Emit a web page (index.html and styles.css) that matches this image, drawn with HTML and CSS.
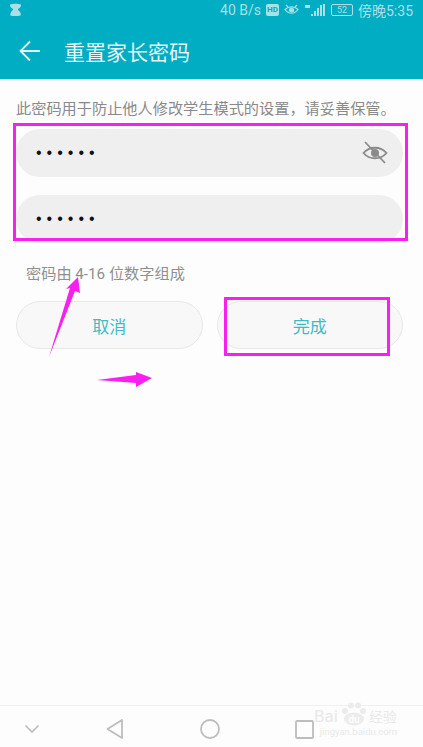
FILE: index.html
```html
<!DOCTYPE html>
<html lang="zh-CN">
<head>
  <meta charset="UTF-8">
  <title>重置家长密码</title>
  <link rel="stylesheet" href="styles.css">
</head>
<body>
  <div class="screen">
    <!-- 顶部栏 -->
    <header class="appbar">
      <div class="status">
        <svg class="status-logo" width="13" height="14" viewBox="0 0 13 14"><path d="M1 1.500C4 .5 9 .5 12 1.500c.5 2-1.500 3.500-3 4.500 0 1 .5 1.500 1.500 2.500 1.500 1.500 1.500 3 1 4-3 .8-8 .8-10 0-.5-1 0-2.500 1-4 1-1 1.500-1.500 1.500-2.500C2.500 5 .5 3.500 1 1.500z" fill="#a8e0e6"/></svg>
        <div class="status-right">
          <span>40 B/s</span>
          <span class="hd">HD</span>
          <svg width="15" height="12" viewBox="0 0 15 12" fill="none" stroke="#a8e0e6" stroke-width="1.200"><path d="M1 5.500c3.500-3.500 9.500-3.500 13 0-3.500 5-9.500 5-13 0z"/><circle cx="7.500" cy="6" r="2" fill="#a8e0e6"/><path d="M2 1l2 2M13 1l-2 2"/></svg>
          <svg width="22" height="14" viewBox="0 0 22 14" fill="#a8e0e6"><rect x="7" y="11" width="2" height="2"/><rect x="10" y="8" width="2" height="5"/><rect x="13" y="5" width="2" height="8"/><rect x="16" y="2" width="2" height="11"/><rect x="19" y="1" width="2" height="12"/><rect x="1" y="2" width="5" height="3"/></svg>
          <span class="battery">52</span>
          <span class="status-time">傍晚5:35</span>
        </div>
      </div>
      <div class="titlebar">
        <svg class="back" width="22" height="22" viewBox="0 0 22 22" fill="none" stroke="#e6f7f9" stroke-width="1.800"><path d="M21 11H1.500M11 1.500 1.500 11l9.500 9.500"/></svg>
        <h1>重置家长密码</h1>
      </div>
    </header>

    <!-- 主内容 -->
    <main class="content">
      <p class="intro">此密码用于防止他人修改学生模式的设置，请妥善保管。</p>
      <div class="field field-first">
        <span class="dots">••••••</span>
        <svg width="26" height="24" viewBox="0 0 26 24" fill="none" stroke="#8a8a8a" stroke-width="1.800"><path d="M1.500 12c6-7 17-7 23 0-6 7-17 7-23 0z"/><circle cx="13" cy="12" r="4" fill="#8a8a8a" stroke="none"/><path d="M3 1l20 21"/></svg>
      </div>
      <div class="field">
        <span class="dots">••••••</span>
      </div>
      <p class="hint">密码由 4-16 位数字组成</p>
      <div class="actions">
        <button class="btn">取消</button>
        <button class="btn">完成</button>
      </div>
    </main>

    <!-- 导航栏 -->
    <nav class="navbar">
      <svg width="16" height="10" viewBox="0 0 16 10" fill="none" stroke="#bdbdbd" stroke-width="1.600"><path d="M1.500 1.500 8 8l6.500-6.500"/></svg>
      <svg width="18" height="20" viewBox="0 0 18 20" fill="none" stroke="#bdbdbd" stroke-width="1.800" stroke-linejoin="round"><path d="M16 1v18L1.500 10z"/></svg>
      <svg width="20" height="20" viewBox="0 0 20 20" fill="none" stroke="#bdbdbd" stroke-width="1.800"><circle cx="10" cy="10" r="9"/></svg>
      <svg width="19" height="19" viewBox="0 0 19 19" fill="none" stroke="#bdbdbd" stroke-width="1.800"><rect x="1" y="1" width="17" height="17" rx="1"/></svg>
    </nav>

    <!-- 标注 -->
    <div class="mark mark-fields"></div>
    <div class="mark mark-done"></div>
    <svg class="arrows" width="423" height="747" viewBox="0 0 423 747" fill="#f81ff0"><path d="M78 277 80 293 75 291 49 357 70 288 66 289z"/><path d="M97 380 136 375 136 372 152 378 136 387 136 383z"/></svg>
    <div class="watermark">
      <div class="wm-top">
        <span>Bai</span>
        <svg width="27" height="24" viewBox="0 0 27 24" fill="#ececec"><circle cx="5" cy="9" r="3"/><circle cx="11" cy="3.500" r="3"/><circle cx="18" cy="3.500" r="3"/><circle cx="23" cy="9" r="3"/><ellipse cx="14" cy="17" rx="10" ry="6.500"/><text x="14" y="21" text-anchor="middle" class="wm-du">du</text></svg>
        <span class="wm-cn">经验</span>
      </div>
      <span class="wm-url">jingyan.baidu.com</span>
    </div>
  </div>
</body>
</html>
```

FILE: styles.css
```css
html, body {
  margin: 0;
  padding: 0;
  background-color: #fdfdfd;
  font-family: "Roboto", "Noto Sans CJK SC", sans-serif;
}

.screen {
  position: relative;
  width: 423px;
  height: 747px;
  overflow: hidden;
  display: flex;
  flex-direction: column;
}

/* 顶部栏 */
.appbar {
  height: 79px;
  background-color: #00adc3;
  border-bottom: 1px solid #bfe9ee;
  flex-shrink: 0;
}

.status {
  height: 19px;
  display: flex;
  justify-content: space-between;
  align-items: center;
  padding: 0 10px 0 9px;
  color: #a8e0e6;
  font-size: 14px;
}

.status-right {
  display: flex;
  align-items: center;
  gap: 5px;
}

.hd {
  width: 13px;
  height: 12px;
  line-height: 12px;
  background-color: #a8e0e6;
  color: #00adc3;
  font-size: 8px;
  font-weight: bold;
  text-align: center;
  border-radius: 2px;
}

.battery {
  width: 20px;
  height: 10px;
  line-height: 10px;
  border: 1px solid #a8e0e6;
  border-radius: 2px;
  font-size: 9px;
  text-align: center;
}

.status-time {
  font-size: 14px;
  white-space: nowrap;
}

.titlebar {
  height: 60px;
  display: flex;
  align-items: center;
  gap: 23px;
  padding: 3px 0 0 19px;
  box-sizing: border-box;
}

.titlebar h1 {
  margin: 0;
  color: #e6f7f9;
  font-size: 21px;
  font-weight: normal;
}

/* 主内容 */
.content {
  flex: 1;
  padding: 0 20px 0 16px;
}

.intro {
  margin: 19px 0 0;
  color: #8a8a8a;
  font-size: 15.200px;
  line-height: 20px;
  white-space: nowrap;
}

.field {
  height: 48px;
  margin-top: 18px;
  padding: 0 15px 0 20px;
  background-color: #efefef;
  border-radius: 24px;
  display: flex;
  justify-content: space-between;
  align-items: center;
}

.field-first {
  margin-top: 10px;
}

.dots {
  color: #111;
  font-family: "Liberation Sans", sans-serif;
  font-size: 16px;
  letter-spacing: 5px;
}

.hint {
  margin: 21px 0 0 10px;
  color: #8f8f8f;
  font-size: 15.200px;
  line-height: 20px;
}

.actions {
  display: flex;
  gap: 14px;
  margin-top: 17px;
}

.btn {
  flex: 1;
  height: 48px;
  background-color: #f8f8f8;
  border: 1px solid #e8e8e8;
  border-radius: 24px;
  color: #3bbcc6;
  font-family: inherit;
  font-size: 17px;
}

/* 导航栏 */
.navbar {
  height: 42px;
  border-top: 1px solid #f0f0f0;
  flex-shrink: 0;
  display: grid;
  grid-template-columns: 64px 102px 88px 101px;
  justify-items: center;
  align-items: center;
  padding-top: 5px;
  box-sizing: border-box;
}

/* 标注 */
.mark {
  position: absolute;
  box-sizing: border-box;
  border: 3px solid #f81ff0;
}

.mark-fields {
  left: 13px;
  top: 123px;
  width: 395px;
  height: 118px;
}

.mark-done {
  left: 224px;
  top: 297px;
  width: 166px;
  height: 59px;
}

.arrows {
  position: absolute;
  left: 0;
  top: 0;
}

.watermark {
  position: absolute;
  left: 307px;
  top: 702px;
  width: 90px;
  display: flex;
  flex-direction: column;
  align-items: flex-end;
  color: #e9e9e9;
}

.wm-top {
  display: flex;
  align-items: flex-end;
  gap: 2px;
  font-size: 17px;
  line-height: 20px;
  white-space: nowrap;
}

.wm-cn {
  font-size: 14px;
  line-height: 18px;
}

.wm-du {
  fill: #fdfdfd;
  font-size: 10px;
  font-weight: bold;
}

.wm-url {
  font-size: 9.500px;
  line-height: 12px;
  white-space: nowrap;
}
```
